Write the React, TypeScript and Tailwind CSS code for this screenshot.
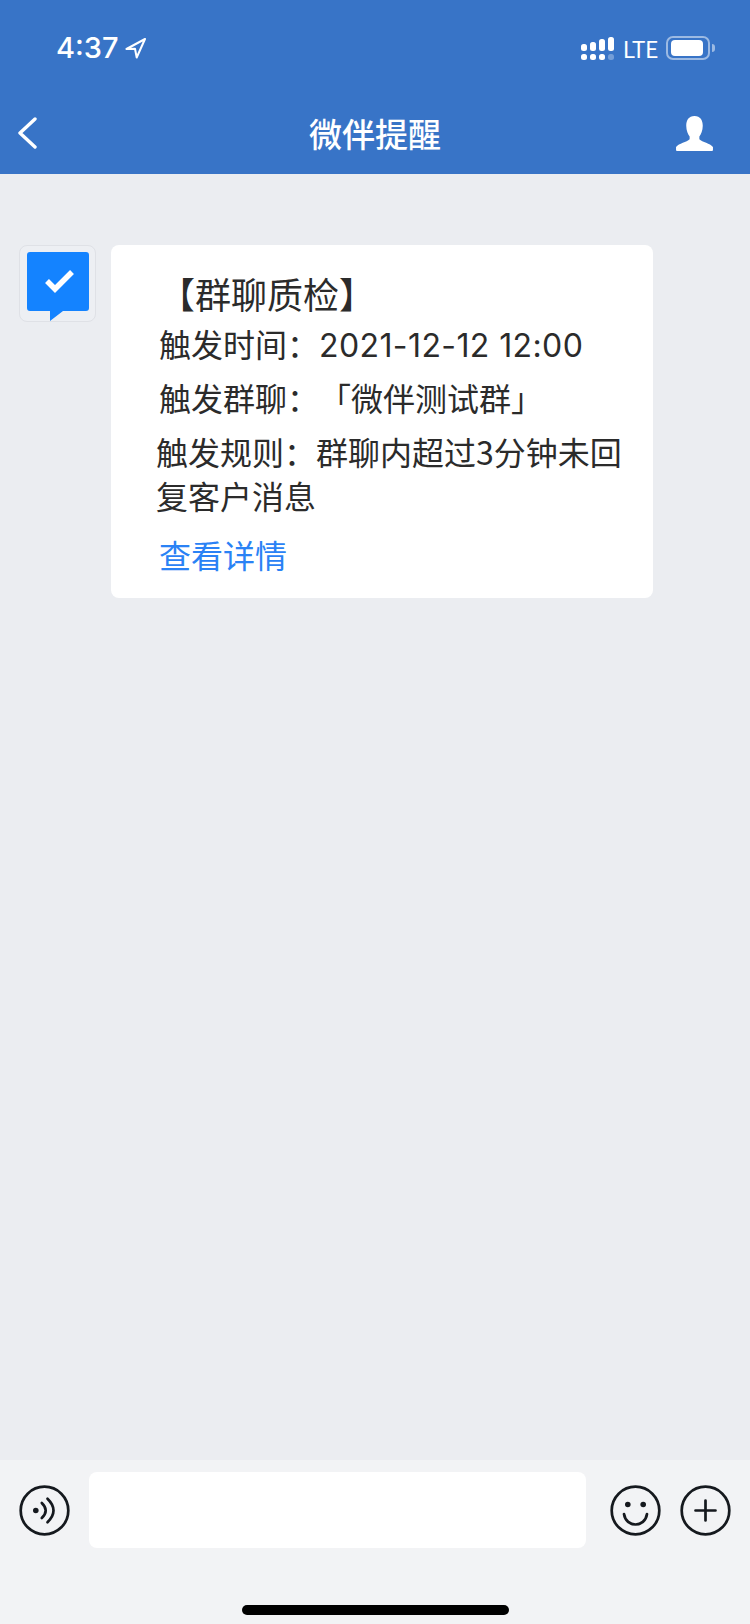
function SignalIcon() {
  const bars = [
    { x: 0, top: 7 },
    { x: 9, top: 5 },
    { x: 18, top: 2 },
    { x: 27, top: 0 },
  ];
  return (
    <svg width="33" height="23" viewBox="0 0 33 23" fill="#fff">
      {bars.map((b) => (
        <rect key={b.x} x={b.x} y={b.top} width="6" height={14 - b.top} rx="2.5" />
      ))}
      <rect x="0" y="17" width="6" height="6" rx="2.5" />
      <rect x="9" y="17" width="6" height="6" rx="2.5" />
      <rect x="18" y="17" width="6" height="6" rx="2.5" />
      <rect x="27" y="17" width="6" height="6" rx="2.5" opacity="0.3" />
    </svg>
  );
}

function StatusBar() {
  return (
    <div className="h-[84px] flex items-start justify-between pt-[32px] pl-[56px] pr-[35px] text-white">
      <div className="flex items-center gap-[6px]">
        <span className="font-['Inter',sans-serif] text-[29px] leading-[32px] font-medium">4:37</span>
        <svg width="21" height="21" viewBox="0 0 21 21" fill="none" stroke="#fff" strokeWidth="2" strokeLinejoin="round">
          <path d="M20 1 L1.5 11 L10 10.7 L11.7 19.5 Z" />
        </svg>
      </div>
      <div className="flex items-center mt-[4px]">
        <SignalIcon />
        <span className="font-['Noto_Sans_CJK_SC',sans-serif] text-[23px] leading-[24px] tracking-[-0.5px] ml-[9px] mr-[8px]">LTE</span>
        <div className="flex items-center gap-[2px]">
          <div className="w-[44px] h-[24px] rounded-[7px] border-2 border-white/50 p-[2px]">
            <div className="w-[32px] h-[16px] rounded-[4px] bg-white ml-[1px]" />
          </div>
          <div className="w-[3px] h-[8px] rounded-r-full bg-white/50" />
        </div>
      </div>
    </div>
  );
}

function NavBar() {
  return (
    <div className="h-[90px] grid grid-cols-[1fr_auto_1fr] items-center px-[37px] pt-[8px] text-white">
      <svg width="19" height="32" viewBox="0 0 19 32" fill="none" stroke="#fff" strokeWidth="3.4" strokeLinecap="round" strokeLinejoin="round" className="-ml-[19px]">
        <path d="M17 2 L2 16 L17 30" />
      </svg>
      <div className="font-['Noto_Sans_CJK_SC',sans-serif] text-[33px] leading-[44px] font-medium">微伴提醒</div>
      <svg width="37" height="35" viewBox="0 0 38 36" fill="#fff" className="justify-self-end">
        <path d="M19 0 C25 0 27.5 4.5 27.5 10 C27.5 15 25.5 19 24 21 L24 24 C27 27 35 28 38 32 L38 35 Q38 36 37 36 L1 36 Q0 36 0 35 L0 32 C3 28 11 27 14 24 L14 21 C12.5 19 10.5 15 10.5 10 C10.5 4.5 13 0 19 0 Z" />
      </svg>
    </div>
  );
}

function Avatar() {
  return (
    <div className="w-[77px] h-[77px] shrink-0 rounded-[8px] border border-[#dfe1e6] bg-[#edeff3] pt-[6px] pl-[7px]">
      <svg width="62" height="70" viewBox="0 0 62 70" fill="none">
        <path d="M3 0 H59 Q62 0 62 3 V56 Q62 59 59 59 H36 L23 69 V59 H3 Q0 59 0 56 V3 Q0 0 3 0 Z" fill="#1483ff" />
        <path d="M20 29 L28 37 L45 20" stroke="#fff" strokeWidth="5.5" />
      </svg>
    </div>
  );
}

function Bubble() {
  return (
    <div className="w-[542px] h-[353px] rounded-[8px] bg-white text-[#2b2b2b] pt-[25px] text-[32px] font-['Noto_Sans_CJK_SC',sans-serif]">
      <div className="pl-[48px] text-[36px] leading-[46px]">【群聊质检】</div>
      <div className="pl-[48px] leading-[46px] mt-[4px] whitespace-nowrap">
        触发时间：<span className="font-['Inter',sans-serif] tracking-[0.4px]">2021-12-12 12:00</span>
      </div>
      <div className="pl-[48px] leading-[46px] mt-[5px] whitespace-nowrap">
        触发群聊：<span className="ml-[16px]">「微伴测试群」</span>
      </div>
      <div className="pl-[45px] leading-[44px] mt-[9px] whitespace-nowrap">触发规则：群聊内超过3分钟未回</div>
      <div className="pl-[45px] leading-[44px]">复客户消息</div>
      <div className="pl-[48px] leading-[44px] mt-[15px] text-[#2a82f5]">查看详情</div>
    </div>
  );
}

function InputBar() {
  return (
    <div className="h-[164px] bg-[#f2f3f5] pt-[12px] relative">
      <div className="flex items-center pl-[19px] pr-[18px]">
        <svg width="51" height="51" viewBox="0 0 51 51" fill="none" stroke="#15191e" strokeWidth="2.7" strokeLinecap="round">
          <circle cx="25.5" cy="25.5" r="23.8" />
          <circle cx="16.8" cy="25.5" r="2.8" fill="#15191e" stroke="none" />
          <path d="M22.8 18 Q30.6 25.5 22.8 33" />
          <path d="M28.5 13.8 Q40.5 25.5 28.5 37.2" />
        </svg>
        <div className="w-[497px] h-[76px] rounded-[8px] bg-white ml-[19px] mr-[24px]" />
        <svg width="51" height="51" viewBox="0 0 51 51" fill="none" stroke="#15191e" strokeWidth="2.7" strokeLinecap="round">
          <circle cx="25.5" cy="25.5" r="23.8" />
          <circle cx="17.8" cy="19.5" r="2.8" fill="#15191e" stroke="none" />
          <circle cx="33.2" cy="19.5" r="2.8" fill="#15191e" stroke="none" />
          <path d="M14 29 C16 43 35 43 37 29" />
        </svg>
        <svg width="51" height="51" viewBox="0 0 51 51" fill="none" stroke="#15191e" strokeWidth="2.7" strokeLinecap="round" className="ml-[19px]">
          <circle cx="25.5" cy="25.5" r="23.8" />
          <path d="M25.5 15.5 V35.5 M15.5 25.5 H35.5" />
        </svg>
      </div>
      <div className="absolute bottom-[9px] left-[242px] w-[267px] h-[10px] rounded-full bg-black" />
    </div>
  );
}

export default function App() {
  return (
    <div className="w-[750px] h-[1624px] flex flex-col bg-[#ebedf1] overflow-hidden">
      <div className="h-[174px] bg-[#3874c7] shrink-0">
        <StatusBar />
        <NavBar />
      </div>
      <div className="flex-1 flex items-start gap-[15px] pl-[19px] pt-[71px]">
        <Avatar />
        <Bubble />
      </div>
      <InputBar />
    </div>
  );
}
